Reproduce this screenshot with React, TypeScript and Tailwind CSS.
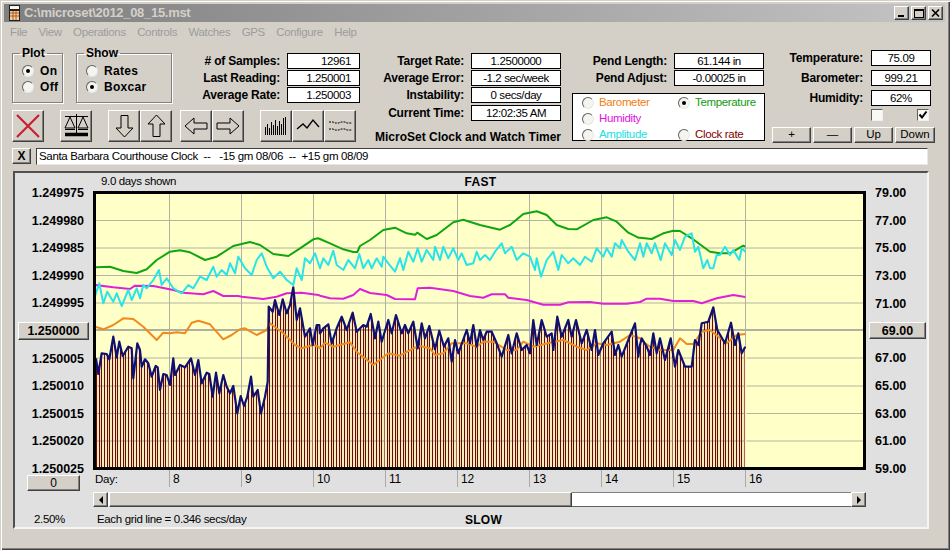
import React from "react";

type P = [number, number];
const conv = (ox: number, oy: number, a: number[]): P[] => {
  const r: P[] = [];
  for (let i = 0; i < a.length; i += 2) r.push([ox + a[i] / 3, oy + a[i + 1] / 3]);
  return r;
};
const merge = (...parts: P[][]): P[] => {
  const out: P[] = [];
  parts.forEach((p) =>
    p.forEach((q) => {
      if (!out.length || q[0] >= out[out.length - 1][0]) out.push(q);
    })
  );
  return out;
};
const pts = (p: P[]) => p.map((q) => q[0].toFixed(1) + "," + q[1].toFixed(1)).join(" ");

const green = merge(
  conv(0, 170, [285,292,330,290,370,303,410,309,440,298,470,270,510,245,540,241,570,247,615,270,650,260,700,228,750,216,780,225,820,252,865,258,900,235,940,208,955,205]),
  conv(320, 190, [0,147,30,160,70,178,100,186,112,186,120,168,150,150,190,120,225,113,260,130,285,134,292,128,320,147,350,135,400,97,430,89,480,105,540,119,570,105,610,72,650,64,680,75,710,105,745,117,770,118,820,90,860,82,890,95,925,128,955,143]),
  conv(630, 190, [30,143,65,147,100,130,130,122,150,123,185,145,240,185,270,190,300,190,340,167,346,170])
);
const cyan = merge(
  conv(0, 170, [285,378,298,340,310,400,322,365,340,395,350,370,365,408,385,360,395,390,410,355,420,385,430,345,440,355,460,330,477,300,485,345,500,325,520,355,545,370,565,345,580,355,600,320,620,330,640,290,650,320,665,300,680,315,690,280,705,310,715,260,735,295,755,315,770,270,785,250,800,290,820,325,840,305,860,330,880,345,890,295,905,330,915,265,930,280,945,250,955,280]),
  conv(320, 190, [0,235,10,205,25,225,40,182,50,225,70,240,85,210,105,235,118,192,130,235,145,210,155,235,170,205,185,230,190,200,205,220,225,245,240,205,250,240,265,185,280,215,293,175,305,215,320,180,340,210,345,170,360,210,370,170,385,205,400,175,415,210,425,190,440,225,460,220,470,185,480,210,495,195,510,210,525,185,545,160,555,190,575,170,590,210,610,190,630,200,645,240,650,205,663,260,680,210,700,185,715,240,725,195,745,220,760,205,780,225,795,200,815,215,830,175,850,200,860,175,875,200,885,160,900,175,905,150,925,185,945,210,960,160]),
  conv(630, 190, [40,200,50,160,65,190,75,160,92,210,105,160,125,195,135,150,150,180,165,140,185,130,195,185,205,170,220,235,232,210,240,235,250,235,260,195,270,195,285,170,300,195,310,180,328,210,335,175,346,185])
);
const magenta = merge(
  conv(0, 170, [285,345,340,352,390,357,405,347,460,348,520,360,550,368,610,373,640,363,670,378,715,378,725,380,790,387,830,380,860,370,905,368,955,375]),
  conv(320, 190, [0,317,30,325,70,326,100,315,120,297,150,309,200,315,225,327,285,328,293,295,330,293,400,303,450,318,490,323,515,313,555,313,565,323,620,330,670,344,720,344,745,337,810,336,850,341,920,341,960,336]),
  conv(630, 190, [50,326,90,326,130,333,190,333,215,340,260,325,310,315,346,321])
);
const orange = merge(
  conv(0, 170, [285,470,310,478,340,465,370,445,400,447,430,470,470,510,490,488,510,490,530,487,555,490,575,458,595,452,630,463,670,508,695,495,720,478,735,475,770,495,800,480]),
  conv(0, 170, [810,460,850,490,885,525,905,535,940,525,955,530]),
  conv(320, 190, [0,475,15,458,40,470,90,457,110,485,160,525,205,490,240,497,280,475,300,468,330,475,345,495,370,490,395,460,440,460,470,470,490,455,520,455,560,480,590,480,610,455,640,470,690,458,730,450,770,470,800,480,830,460,860,465,900,455,930,435,960,445]),
  conv(630, 190, [40,455,60,470,90,480,130,480,150,445,170,462,190,462,215,425,240,420,290,460,320,435,346,432])
);
const navy = merge(
  conv(90, 280, [18,235,25,282,35,220,50,222,58,238,70,170,80,232,88,185,98,228,115,200,125,205,130,295,142,190,150,210,155,260,165,238,175,250,185,290,197,258,203,262,210,330,220,282,230,285,240,315,250,235,255,285,270,255,285,262,303,235,315,285,325,240,335,310,350,278,358,282,368,350,378,278,388,340,400,285,410,320,420,340,430,318,442,400,452,348,462,378,472,350,483,290,490,350,503,330,513,400,525,350,533,305,536,80,548,95,555,60,568,105,578,58,590,100,600,75,610,22,620,120,630,85,645,170,660,145,668,195,680,135,688,135]),
  conv(320, 190, [0,430,10,415,25,403,35,460,50,415,65,380,80,420,98,368,110,425,130,405,140,410,152,372,165,445,175,395,185,455,205,390,215,430,228,375,245,430,255,405,265,430,280,395,293,475,305,400,315,445,328,408,345,478,358,422,372,470,385,445,395,515,405,450,415,490,440,420,450,460,460,405,470,470,480,420,490,450,500,425,515,425,530,460,545,500,565,435,575,490,590,430,605,480,620,465,630,490,640,390,650,465,665,390,680,440,695,430,700,480,712,380,725,440,745,390,755,440,768,390,785,460,800,420,815,480,825,420,835,495,850,460,875,425,885,495,895,465,905,500,925,450,945,400,955,500,960,465]),
  conv(630, 190, [35,445,50,470,60,495,70,430,80,490,90,445,105,510,122,445,135,530,145,480,165,530,185,530,195,450,205,465,215,400,235,395,250,352,262,420,285,460,303,398,315,465,325,430,335,490,346,470])
);
const navyY = (x: number) => {
  for (let i = 1; i < navy.length; i++) {
    if (x <= navy[i][0]) {
      const a = navy[i - 1];
      const b = navy[i];
      const t = b[0] === a[0] ? 0 : (x - a[0]) / (b[0] - a[0]);
      return a[1] + (b[1] - a[1]) * t;
    }
  }
  return navy[navy.length - 1][1];
};
const dayXs = [169.5, 241.5, 313.5, 385.5, 457.5, 529.5, 601.5, 673.5, 745.5];
const gridYs = [220.5, 248, 275.5, 303, 358, 386, 413.5, 441];
const barsPath = () => {
  let d = "";
  for (let x = 96.5; x < 745; x += 2.667) {
    const sx = Math.floor(x) + 0.5;
    d += `M${sx} ${navyY(x).toFixed(1)}V468`;
  }
  return d;
};

const raised =
  "border border-t-white border-l-white border-r-[#404040] border-b-[#404040] shadow-[inset_-1px_-1px_0_#808080] bg-[#d4d0c8]";

function Radio({ on }: { on?: boolean }) {
  return (
    <span className="w-[12px] h-[12px] shrink-0 rounded-full border border-t-[#606060] border-l-[#606060] border-r-[#e8e8e8] border-b-[#e8e8e8] bg-[#f4f4f0] flex items-center justify-center">
      {on && <span className="w-[4px] h-[4px] rounded-full bg-black" />}
    </span>
  );
}
function Label({ children }: { children: React.ReactNode }) {
  return <div className="font-bold text-[12px] leading-[16px] text-right whitespace-nowrap tracking-[-0.2px]">{children}</div>;
}
function Field({ children }: { children: React.ReactNode }) {
  return <div className="h-[16px] border border-black bg-white text-center text-[11.5px] leading-[14px] whitespace-nowrap tracking-[-0.4px]">{children}</div>;
}
function Group({ title, width, items }: { title: string; width: string; items: [string, boolean][] }) {
  return (
    <fieldset className={`${width} h-[57px] border border-[#808080] shadow-[1px_1px_0_#fff,inset_1px_1px_0_#fff] pl-[9px]`}>
      <legend className="font-bold text-[12px] leading-[14px] px-[2px] -ml-[2px]">{title}</legend>
      <div className="flex flex-col gap-[4px] pt-[5px]">
        {items.map(([t, on]) => (
          <div key={t} className="flex items-center gap-[6px] h-[12px] font-bold text-[12px] tracking-[0.3px]">
            <Radio on={on} />
            {t}
          </div>
        ))}
      </div>
    </fieldset>
  );
}
function ToolBtn({ children, className = "" }: { children: React.ReactNode; className?: string }) {
  return <div className={`${raised} w-[32px] h-[32px] flex items-center justify-center ${className}`}>{children}</div>;
}
function Legend({ color, text, on }: { color: string; text: string; on?: boolean }) {
  return (
    <div className={`flex items-center gap-[5px] h-[16px] text-[11.5px] tracking-[-0.35px] ${color}`}>
      <Radio on={on} />
      {text}
    </div>
  );
}
function SmallBtn({ children, w }: { children: React.ReactNode; w: string }) {
  return <div className={`${raised} ${w} h-[16px] flex items-center justify-center text-[11.5px] leading-none`}>{children}</div>;
}

const Icon = ({ children }: { children: React.ReactNode }) => (
  <svg width="30" height="30" viewBox="0 0 30 30" fill="none" stroke="black" strokeWidth="1">
    {children}
  </svg>
);

function WinBtn({ children }: { children: React.ReactNode }) {
  return <div className={`${raised} w-[15px] h-[14px] flex items-center justify-center`}>{children}</div>;
}

function AxisRow({ children }: { children: React.ReactNode }) {
  return <div className="h-[16px] leading-[16px] font-bold text-[12.5px] whitespace-nowrap">{children}</div>;
}

export default function App() {
  const left1 = ["1.249975", "1.249980", "1.249985", "1.249990", "1.249995"];
  const left2 = ["1.250005", "1.250010", "1.250015", "1.250020", "1.250025"];
  const right1 = ["79.00", "77.00", "75.00", "73.00", "71.00"];
  const right2 = ["67.00", "65.00", "63.00", "61.00", "59.00"];
  return (
    <div
      className="w-[950px] h-[550px] overflow-hidden bg-[#d4d0c8] text-black text-[12px] shadow-[inset_1px_1px_0_#d4d0c8,inset_2px_2px_0_#fff,inset_-1px_-1px_0_#404040,inset_-2px_-2px_0_#808080] flex flex-col"
      style={{ fontFamily: '"Liberation Sans", Arial, sans-serif' }}
    >
      {/* title bar */}
      <div className="mx-[4px] mt-[4px] w-[941px] h-[18px] shrink-0 bg-gradient-to-r from-[#808080] to-[#c4c4c4] flex items-center pl-[5px] pr-[2px]">
        <svg width="11" height="16" viewBox="0 0 11 16" className="shrink-0">
          <rect width="11" height="16" fill="#202020" />
          <rect x="1" y="1" width="9" height="3" fill="#f4f4f4" />
          <rect x="1" y="6" width="9" height="9" fill="#e8d8a0" />
          <path d="M1 8h9M1 11h9M4 6v9M7 6v9" stroke="#c05020" strokeWidth="1" />
        </svg>
        <span className="ml-[4px] text-[#d4d0c8] font-bold text-[13px] tracking-[-0.3px] whitespace-nowrap">C:\microset\2012_08_15.mst</span>
        <div className="ml-auto flex items-center">
          <WinBtn>
            <span className="w-[6px] h-[2px] bg-black mt-[6px] -ml-[2px]" />
          </WinBtn>
          <div className="w-[2px]" />
          <WinBtn>
            <span className="w-[10px] h-[9px] border border-black border-t-2" />
          </WinBtn>
          <div className="w-[2px]" />
          <WinBtn>
            <svg width="9" height="8" viewBox="0 0 9 8">
              <path d="M1 0.5L8 7.5M8 0.5L1 7.5" stroke="black" strokeWidth="1.6" />
            </svg>
          </WinBtn>
        </div>
      </div>
      {/* menu */}
      <div className="h-[20px] shrink-0 flex items-center pt-[2px] pl-[10px] gap-[11.3px] text-[11.5px] tracking-[-0.35px] text-[#9c9c9c]">
        <span>File</span>
        <span>View</span>
        <span>Operations</span>
        <span>Controls</span>
        <span>Watches</span>
        <span>GPS</span>
        <span>Configure</span>
        <span>Help</span>
      </div>
      {/* top controls */}
      <div className="h-[103px] shrink-0 flex pl-[12px]">
        <div className="w-[348px] pt-[4px] flex flex-col">
          <div className="flex items-start">
            <Group title="Plot" width="w-[51px]" items={[["On", true], ["Off", false]]} />
            <div className="w-[13px]" />
            <Group title="Show" width="w-[96px]" items={[["Rates", false], ["Boxcar", true]]} />
            <div className="mt-[7px] w-[188px] grid grid-cols-[1fr_73px] gap-x-[7px] gap-y-[1px]">
              <Label># of Samples:</Label>
              <Field>
                <div className="text-right pr-[8px]">12961</div>
              </Field>
              <Label>Last Reading:</Label>
              <Field>
                <div className="text-right pr-[8px]">1.250001</div>
              </Field>
              <Label>Average Rate:</Label>
              <Field>
                <div className="text-right pr-[8px]">1.250003</div>
              </Field>
            </div>
          </div>
          <div className="flex mt-[7px]">
            <ToolBtn>
              <svg width="28" height="28" viewBox="0 0 28 28">
                <path d="M3 3L25 25M25 3L3 25" stroke="#c82030" strokeWidth="2.2" />
              </svg>
            </ToolBtn>
            <div className="w-[16px]" />
            <ToolBtn>
              <Icon>
                <path d="M15.5 3V23M4 5.5H27" />
                <path d="M9 6L4 17H14ZM22 6L17 17H27Z" />
                <path d="M4 18.5H14M17 18.5H27" />
                <path d="M4 23.5H27" strokeWidth="3.5" />
              </Icon>
            </ToolBtn>
            <div className="w-[16px]" />
            <ToolBtn>
              <Icon>
                <path d="M12 4.5H19V17H24L15.5 26L7 17H12Z" />
              </Icon>
            </ToolBtn>
            <ToolBtn>
              <Icon>
                <path d="M12 25.5H19V13H24L15.5 4L7 13H12Z" />
              </Icon>
            </ToolBtn>
            <div className="w-[8px]" />
            <ToolBtn>
              <Icon>
                <path d="M26 12V18H13V23L4 15L13 7V12Z" />
              </Icon>
            </ToolBtn>
            <ToolBtn>
              <Icon>
                <path d="M4 12V18H17V23L26 15L17 7V12Z" />
              </Icon>
            </ToolBtn>
            <div className="w-[16px]" />
            <ToolBtn>
              <svg width="30" height="30" viewBox="0 0 30 30" fill="none" stroke="black" strokeWidth="1" shapeRendering="crispEdges">
                <path d="M4.5 24V16M6.5 24V13M8.5 24V17M10.5 24V11M12.5 24V14M14.5 24V9M16.5 24V15M18.5 24V10M20.5 24V13M22.5 24V7M24.5 24V6" />
              </svg>
            </ToolBtn>
            <ToolBtn>
              <Icon>
                <path d="M4 18L10 13L14 17L20 9L26 16" strokeWidth="1.3" />
              </Icon>
            </ToolBtn>
            <ToolBtn>
              <Icon>
                <path d="M4 11H8L10 12H14L16 11H20L22 12H27M4 18H8L10 19H14L16 18H20L22 19H27" strokeDasharray="2 1" />
              </Icon>
            </ToolBtn>
          </div>
        </div>
        <div className="w-[190px] ml-[11px] pt-[11px] flex flex-col">
          <div className="grid grid-cols-[1fr_90px] gap-x-[7px] gap-y-[1px]">
            <Label>Target Rate:</Label>
            <Field>1.2500000</Field>
            <Label>Average Error:</Label>
            <Field>-1.2 sec/week</Field>
            <Label>Instability:</Label>
            <Field>0 secs/day</Field>
            <div className="mt-[1px]">
              <Label>Current Time:</Label>
            </div>
            <div className="mt-[1px]">
              <Field>12:02:35 AM</Field>
            </div>
          </div>
          <div className="mt-[9px] text-right font-bold text-[12px] leading-[14px] whitespace-nowrap">MicroSet Clock and Watch Timer</div>
        </div>
        <div className="w-[193px] ml-[11px] pt-[11px] flex flex-col">
          <div className="grid grid-cols-[1fr_90px] gap-x-[7px] gap-y-[1px] pr-[1px]">
            <Label>Pend Length:</Label>
            <Field>61.144 in</Field>
            <Label>Pend Adjust:</Label>
            <Field>-0.00025 in</Field>
          </div>
          <div className="mt-[7px] h-[48px] border border-black bg-white grid grid-cols-[96px_1fr] content-center pl-[9px] pt-[3px]">
            <Legend color="text-[#f08010]" text="Barometer" />
            <Legend color="text-[#109a10]" text="Temperature" on />
            <Legend color="text-[#e010e0]" text="Humidity" />
            <div />
            <Legend color="text-[#20e0e0]" text="Amplitude" />
            <Legend color="text-[#800000]" text="Clock rate" />
          </div>
        </div>
        <div className="w-[163px] ml-[7px] pt-[8px] flex flex-col">
          <div className="grid grid-cols-[1fr_60px] gap-x-[8px] gap-y-[4px] pr-[4px]">
            <Label>Temperature:</Label>
            <Field>75.09</Field>
            <Label>Barometer:</Label>
            <Field>999.21</Field>
            <Label>Humidity:</Label>
            <Field>62%</Field>
          </div>
          <div className="mt-[3px] pl-[99px] flex gap-[34px]">
            <span className="w-[12px] h-[12px] border border-t-[#606060] border-l-[#606060] border-r-[#f0f0f0] border-b-[#f0f0f0] bg-[#f8f8f4]" />
            <span className="w-[12px] h-[12px] border border-t-[#606060] border-l-[#606060] border-r-[#f0f0f0] border-b-[#f0f0f0] bg-[#f8f8f4] flex items-center justify-center">
              <svg width="10" height="10" viewBox="0 0 10 10">
                <path d="M1.5 4.5L4 7.5L8.5 1.5" fill="none" stroke="black" strokeWidth="2" />
              </svg>
            </span>
          </div>
          <div className="mt-[6px] flex gap-[2px]">
            <SmallBtn w="w-[39px]">+</SmallBtn>
            <SmallBtn w="w-[39px]">—</SmallBtn>
            <SmallBtn w="w-[39px]">Up</SmallBtn>
            <SmallBtn w="w-[40px]">Down</SmallBtn>
          </div>
        </div>
      </div>
      {/* watch name */}
      <div className="mt-[3px] h-[17px] shrink-0 flex pl-[12px]">
        <div className={`${raised} w-[19px] h-[16px] flex items-center justify-center font-bold text-[12px] leading-none`}>X</div>
        <div className="ml-[5px] w-[892px] h-[17px] bg-white border border-t-[#404040] border-l-[#404040] border-r-[#e8e8e8] border-b-[#e8e8e8] pl-[2px] text-[11.5px] leading-[15px] tracking-[-0.33px] whitespace-pre">
          Santa Barbara Courthouse Clock  --   -15 gm 08/06  --  +15 gm 08/09
        </div>
      </div>
      {/* chart panel */}
      <div className="mt-[6px] ml-[13px] w-[916px] h-[358px] shrink-0 bg-[#e0e0e0] border-2 border-t-[#505050] border-l-[#505050] border-r-[#f4f4f4] border-b-[#f4f4f4] flex">
        {/* left axis */}
        <div className="w-[78px] shrink-0 pt-[12px] flex flex-col">
          <div className="h-[292px] flex flex-col justify-between items-end pr-[9px]">
            {left1.map((t) => (
              <AxisRow key={t}>{t}</AxisRow>
            ))}
            <div className={`${raised} -my-[1px] -mr-[5px] w-[71px] h-[18px] flex items-center justify-center font-bold text-[12.5px]`}>1.250000</div>
            {left2.map((t) => (
              <AxisRow key={t}>{t}</AxisRow>
            ))}
          </div>
          <div className={`${raised} -mt-[2px] ml-[12px] w-[53px] h-[16px] flex items-center justify-center text-[12px]`}>0</div>
          <div className="mt-[20px] pl-[19px] h-[16px] leading-[16px] text-[11.5px] tracking-[-0.35px]">2.50%</div>
        </div>
        {/* middle */}
        <div className="w-[773px] shrink-0 flex flex-col">
          <div className="h-[18px] grid grid-cols-[1fr_auto_1fr] items-center">
            <span className="pl-[8px] text-[11.5px] tracking-[-0.35px] whitespace-nowrap">9.0 days shown</span>
            <span className="font-bold text-[12px] tracking-[0.3px] ml-[2px]">FAST</span>
            <span />
          </div>
          <div className="h-[279px] border-[3px] border-black bg-[#ffffc8]">
            <svg width="767" height="273" viewBox="96 194 767 273" className="block">
              {gridYs.map((y) => (
                <path key={y} d={`M96 ${y}H863`} stroke="#b4b4a0" strokeWidth="1" />
              ))}
              <path d="M96 330H863" stroke="#b0b0a0" strokeWidth="2" />
              {dayXs.map((x) => (
                <path key={x} d={`M${x} 194V468`} stroke="#b0b0a8" strokeWidth="1" />
              ))}
              <path d={barsPath()} stroke="#680808" strokeWidth="1.15" fill="none" />
              {dayXs.map((x) => (
                <path key={x} d={`M${x} ${navyY(x) + 1}V468`} stroke="#fff8c4" strokeWidth="1.8" />
              ))}
              <polyline points={pts(orange)} fill="none" stroke="#f08a1c" strokeWidth="2" strokeLinejoin="round" />
              <polyline points={pts(green)} fill="none" stroke="#10a610" strokeWidth="2" strokeLinejoin="round" />
              <polyline points={pts(magenta)} fill="none" stroke="#e020d8" strokeWidth="2" strokeLinejoin="round" />
              <polyline points={pts(cyan)} fill="none" stroke="#28e4e8" strokeWidth="2" strokeLinejoin="round" />
              <polyline points={pts(navy)} fill="none" stroke="#101070" strokeWidth="2.2" strokeLinejoin="round" />
            </svg>
          </div>
          <div className="h-[17px] flex text-[11.5px] leading-[18px] tracking-[-0.2px]">
            <div className="w-[76px] pl-[2px]">Day:</div>
            {[8, 9, 10, 11, 12, 13, 14, 15, 16].map((d) => (
              <div key={d} className="w-[72px] border-l border-[#a8a8a8] pl-[3px] text-[12px]">
                {d}
              </div>
            ))}
          </div>
          <div className="mt-[5px] h-[15px] flex bg-white">
            <div className={`${raised} w-[15px] h-[15px] flex items-center justify-center`}>
              <span className="w-0 h-0 border-y-[4px] border-y-transparent border-r-[4px] border-r-black" />
            </div>
            <div className={`${raised} ml-[1px] w-[463px] h-[15px]`} />
            <div className="flex-1 border-y border-t-[#808080] border-b-[#606060]" />
            <div className={`${raised} w-[15px] h-[15px] flex items-center justify-center`}>
              <span className="w-0 h-0 border-y-[4px] border-y-transparent border-l-[4px] border-l-black" />
            </div>
          </div>
          <div className="mt-[4px] h-[16px] grid grid-cols-[1fr_auto_1fr] items-center">
            <span className="pl-[4px] text-[11.5px] tracking-[-0.35px] whitespace-nowrap">Each grid line = 0.346 secs/day</span>
            <span className="font-bold text-[12px] tracking-[0.3px] ml-[8px]">SLOW</span>
            <span />
          </div>
        </div>
        {/* right axis */}
        <div className="flex-1 pt-[12px]">
          <div className="h-[292px] flex flex-col justify-between pl-[9px]">
            {right1.map((t) => (
              <AxisRow key={t}>{t}</AxisRow>
            ))}
            <div className={`${raised} -my-[1px] -ml-[6px] w-[57px] h-[17px] flex items-center justify-center font-bold text-[12.5px]`}>69.00</div>
            {right2.map((t) => (
              <AxisRow key={t}>{t}</AxisRow>
            ))}
          </div>
        </div>
      </div>
    </div>
  );
}
